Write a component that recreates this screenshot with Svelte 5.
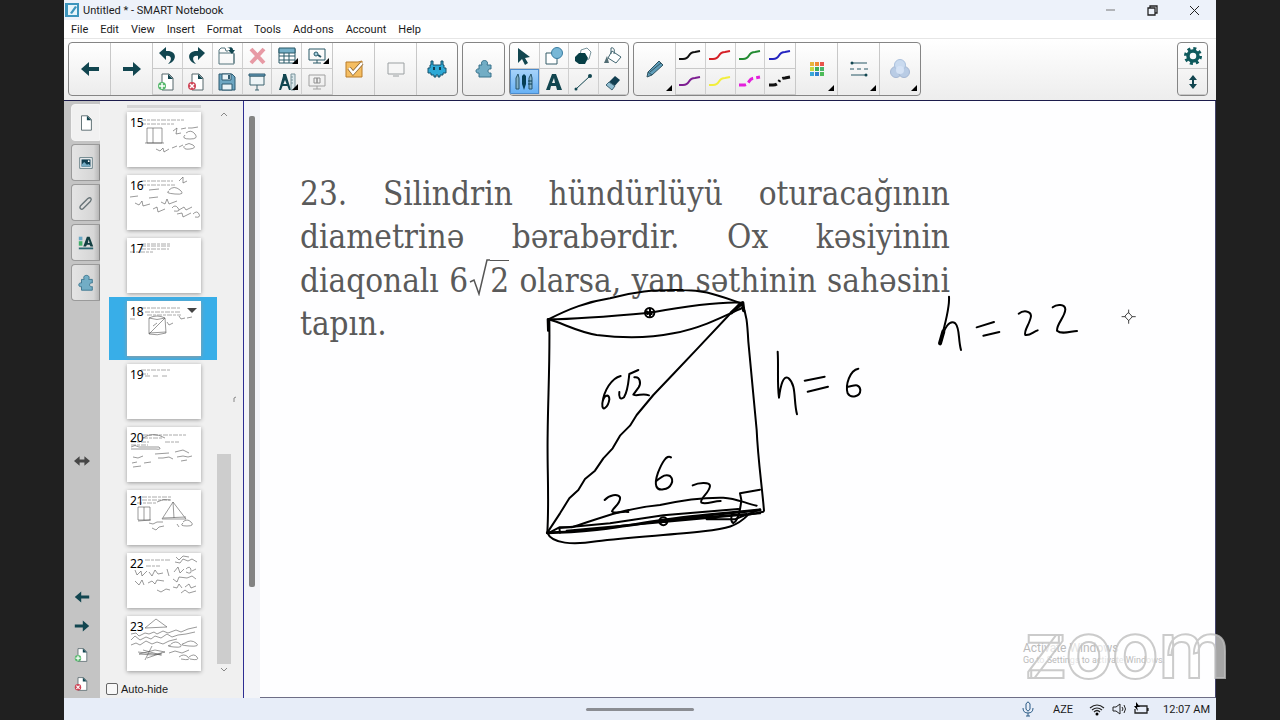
<script lang="ts">
	const menus = ['File', 'Edit', 'View', 'Insert', 'Format', 'Tools', 'Add-ons', 'Account', 'Help'];

	const dark = '#124650';
	const page = '<path d="M5 2h7l4 4v12H5z" fill="#fff" stroke="#55666b"/><path d="M11 2l5 5h-5z" fill="#124650"/>';
	const swirl = 'M-1 12H3C11 12 7 5 15 5L20 4';

	// All icons are drawn on a 20x20 grid
	const icons: Record<string, string> = {
		back: `<path d="M1 10l8-7v5h10v4H9v5z" fill="${dark}"/>`,
		forward: `<path d="M19 10l-8-7v5H1v4h10v5z" fill="${dark}"/>`,
		undo: `<path d="M2 7l7-6v4c12-1 11 11 2 13 5-5 3-9-2-8v4z" fill="${dark}"/>`,
		redo: `<path d="M18 7l-7-6v4C-1 4 0 16 9 18c-5-5-3-9 2-8v4z" fill="${dark}"/>`,
		open: '<path d="M2 18V4l2-2h4l1 3h2M2 18h15V7H2M17 8v9" fill="none" stroke="#54747d"/><path d="M10 2c5-2 6 0 6 2h2l-3 4-4-4h2c0-2-1-2-3-2z" fill="#124650"/>',
		remove: '<path d="M4 3l13 14M17 3L4 17" stroke="#e79aa5" stroke-width="4"/>',
		table: '<path d="M2 3h16v14H2z" fill="#fff" stroke="#285867"/><path d="M2 2h16v5H2z" fill="#76b0c8" stroke="#285867"/><path d="M2 10h16M2 14h16M7 7v10M12 7v10" stroke="#285867"/>',
		capture: '<path d="M2 3h16v11H2zM10 14v3M6 17h8" fill="none" stroke="#285867"/><circle cx="9" cy="8" r="2" fill="#a6cfdf" stroke="#285867"/><path d="M11 9l3 2" stroke="#285867" stroke-width="2"/>',
		addPage: page + '<circle cx="5" cy="14" r="4" fill="#58b96e"/><path d="M5 11v6M2 14h6" stroke="#fff" stroke-width="1.5"/>',
		delPage: page + '<circle cx="5" cy="14" r="4" fill="#cf4557"/><path d="M3 12l4 4M7 12l-4 4" stroke="#fff" stroke-width="1.5"/>',
		save: '<path d="M2 2h13l3 3v13H2z" fill="#6da6c2" stroke="#2f5b70"/><path d="M5 2h9v6H5zM5 12h10v6H5z" fill="#e9f3f7" stroke="#2f5b70"/><path d="M11 3h2v4h-2z" fill="#2f5b70"/>',
		screen: '<path d="M3 4h14v9H3z" fill="#eef4f6" stroke="#3f6570"/><path d="M2 2h16v2H2z" fill="#6da6c2" stroke="#2f5b70"/><path d="M10 13v5M8 18h4" stroke="#3f6570"/>',
		measure: '<path d="M6 2h3l5 16h-2L8 8 4 18H2L6 4z" fill="#124650"/><path d="M4 13h7" stroke="#124650" stroke-width="2"/><path d="M14 2h4v16h-4zM14 5h2M14 8h2M14 11h2" fill="#dbe8ec" stroke="#78939b"/>',
		dual: '<path d="M2 3h16v11H2zM10 14v3M6 17h8" fill="none" stroke="#a0a0a0"/><path d="M7 6h3v5H7zM10 6h3v5h-3z" fill="none" stroke="#909090"/>',
		check: '<path d="M2 3h12l4-1v16H2V3z" fill="#f5be62" stroke="#b97d2b"/><path d="M5 9l4 5 9-10" fill="none" stroke="#8d6631" stroke-width="4"/><path d="M5 9l4 5 9-10" fill="none" stroke="#fff" stroke-width="2.5"/>',
		monitor: '<path d="M2 4h16v11H2z" fill="#f6f6f6" stroke="#9ba0a2"/><path d="M7 17h6" stroke="#9ba0a2"/>',
		monster: '<path d="M4 2h2v4h8V2h2v4h1v3h2v5h-3v2h-3v2h-2v-2H9v2H7v-2H4v-2H1V9h2V6h1z" fill="#2da9d6" stroke="#17516b"/><path d="M6 8h2v3H6zM12 8h2v3h-2z" fill="#123f51"/>',
		puzzle: '<path d="M8 6c-3-6 8-6 5 0h4v4c-4-1-4 5 0 4v4H5v-4c-4 1-4-5 0-4V6z" fill="#72adc5" stroke="#39738c"/>',
		pointer: `<path d="M4 2l12 9-5 1 3 5-3 2-3-6-4 4z" fill="${dark}"/>`,
		shapes: '<path d="M2 7h11v11H2z" fill="#fff" stroke="#355d68"/><circle cx="13" cy="7" r="5.500" fill="#78b7d6" stroke="#3a7da1"/>',
		polygon: '<path d="M8 4l6-2 4 4-2 7-5 2-4-5z" fill="#fff" stroke="#78939b"/><path d="M2 11l4-4h6l3 5-3 6H6l-4-3z" fill="#063e45"/>',
		fill: '<path d="M9 5l9 6-5 6-8-5zM8 2c3-1 4 2 3 6M8 2v6" fill="#fff" stroke="#416570"/><path d="M4 10l2 7H1z" fill="#506c73"/>',
		pens: '<path d="M2 17V6l2-4 1 4v11zM15 17V6l2-4 1 4v11z" fill="#84b2c8" stroke="#28556a"/><path d="M8 4l2-2 2 2v8l-2 6-2-6z" fill="#063e55"/><path d="M14 9h4M14 12h4" stroke="#063e55"/>',
		text: '<path d="M8 2h4l6 16h-5l-1-4H7l-1 4H2zM8 11h3l-1-5z" fill="#124650" fill-rule="evenodd"/>',
		line: '<path d="M3 17L17 4" stroke="#124650"/><circle cx="3" cy="17" r="1.500" fill="#124650"/><circle cx="17" cy="4" r="2" fill="#124650"/>',
		eraser: '<path d="M3 13L12 4l5 4-8 9z" fill="#123f51"/><path d="M3 13l3-3 6 4-3 4z" fill="#90bdd1" stroke="#406778"/>',
		pen: '<path d="M3 13L14 2l4 4L7 16l-5 2z" fill="#5f9db9" stroke="#2f5361"/><path d="M3 13l4 3M5 13L16 4" stroke="#2f5361"/>',
		styles: '<path d="M2 4h16M2 16h16" stroke="#285867"/><path d="M1 10h18" stroke="#285867" stroke-dasharray="4 3"/><circle cx="3" cy="4" r="1.500" fill="#124650"/><circle cx="17" cy="16" r="1.500" fill="#124650"/>',
		blend: '<circle cx="6" cy="13" r="5.500" fill="#b9cce5" stroke="#a4b7d2"/><circle cx="14" cy="13" r="5.500" fill="#b9cce5" stroke="#a4b7d2"/><circle cx="10" cy="6" r="5.500" fill="#c9daef" stroke="#aac0dd"/><circle cx="10" cy="11" r="4" fill="#d4e2f5"/>',
		gear: '<circle cx="10" cy="10" r="5" fill="none" stroke="#0f5a5d" stroke-width="3.500"/><circle cx="10" cy="10" r="7.500" fill="none" stroke="#0f5a5d" stroke-width="3" stroke-dasharray="3 2.900"/>',
		updown: `<path d="M10 3l4 5h-3v4h3l-4 5-4-5h3V8H6z" fill="${dark}"/>`,
		leftright: '<path d="M0 10l7-6v4h6V4l7 6-7 6v-4H7v4z" fill="#474747"/>',
		page,
		gallery: '<path d="M3 4h14v12H3z" fill="#f3f6f7" stroke="#5f7980"/><path d="M5 6h10v8H5z" fill="#123f51"/><path d="M5 12l3-3 3 3 2-1 2 2v1H5z" fill="#77adc5"/><circle cx="13" cy="8" r="1" fill="#fff"/>',
		clip: '<path d="M5 12l7-7c3-2 5 0 3 3l-8 8c-2 2-5 0-3-3l7-7" fill="none" stroke="#687478" stroke-width="1.500"/>',
		properties: '<path d="M2 3h4v4H2z" fill="#69a8c6"/><path d="M2 8h4v5H2z" fill="#42af69"/><path d="M2 15h16v2H2z" fill="#2d6872"/><path d="M11 3h3l4 11h-3l-1-2h-3l-1 2H7zM12 10h2l-1-4z" fill="#123f41" fill-rule="evenodd"/>'
	};

	const edits = ['undo', 'redo', 'open', 'remove', 'table', 'capture', 'addPage', 'delPage', 'save', 'screen', 'measure', 'dual'];
	const tools = ['pointer', 'shapes', 'polygon', 'fill', 'pens', 'text', 'line', 'eraser'];
	const hasMenu = ['table', 'capture', 'measure'];

	const strokes = [
		{ color: '#111' },
		{ color: '#d52027' },
		{ color: '#238b32' },
		{ color: '#2424c0' },
		{ color: '#7d1e91' },
		{ color: '#f2ee3c' },
		{ color: '#e31edb', dash: '7 3', width: 3 },
		{ color: '#111', dash: '8 3 2 3', width: 3 }
	];

	const palette = ['#e8b43c', '#f08a35', '#e8544b', '#c6d83f', '#3fae5b', '#48b56a', '#38a6d8', '#2f7fd0', '#4dbb58'];

	// Miniature ink for each page, on a 74x55 grid
	const pages = [
		{ n: 15, print: ['M14 8h43', 'M14 12h33'], ink: 'M20 16h15v15H20zM26 16v15M18 31h19M46 19l4-3-1 6 5-1M54 17l5-1M61 16l4 0 6-1M29 37l4 2 3-3 1 4 5-3M45 36l5-2M52 35l4-2M59 21q5-4 9 1t-5 5-5-4M58 33q4-3 8 0t-3 4-6-3' },
		{ n: 16, print: ['M14 6h32', 'M14 10h34'], ink: 'M52 6l4-4 0 6 4-2M22 15l10-1M42 15q5-5 11 0t-5 4-6-3M3 22l8-1M8 28l4 2 3-4 1 5 7-2M22 23l9-1M34 27l4 2 2-5 2 5 8-3M26 34l4-2 1 5 7-3M45 33q3-4 6 0t-4 3M52 35l5-3 2 3 6-3M50 39l5-1 1 4 8-4M66 39q4-4 6 0t-4 3' },
		{ n: 17, print: ['M14 6h29', 'M14 8h29', 'M14 11h28', 'M3 14h23'], ink: '' },
		{ n: 18, print: ['M14 7h39', 'M18 11h35', 'M20 14h34', 'M3 18h6'], ink: 'M22 17q8-4 16 0l1 15q-9 3-17 1zM22 17q8 3 16 0L22 33M22 32l17-1M26 25l4-3M40 21l2 3 4-2M52 15l2 3 4-1M60 17l5-1' },
		{ n: 19, print: ['M14 6h29', 'M14 10h7', 'M18 12h6M26 12h6M35 12h6'], ink: '' },
		{ n: 20, print: ['M16 8h43', 'M16 11h20', 'M4 15h18M38 15h14', 'M4 18h17'], ink: 'M16 11q10-7 22 0M4 20q4-3 8 0h20q3 3-3 2L4 22M6 30l5 1 5-2M28 27l14-1M31 31l5 0 6-1 4 2M48 25l8-2 6 3M50 30l6-1 5 1 4-1M5 36l5-1M17 36l7-1M6 40l8-1M54 34l6-1' },
		{ n: 21, print: ['M15 7h30', 'M15 10h28', 'M10 13h20'], ink: 'M11 17h12v13H11zM17 17v13M11 31l13-1M46 12L35 29h24zM46 12l1 16M36 28l23-1M22 33l4 1 4-2 6 0M25 38l4 2 3-3 5-1M50 34l2 3M56 32q4-4 8 0t-4 4-4-3M30 12q6-4 14-2' },
		{ n: 22, print: ['M18 7h25', 'M19 13h14'], ink: 'M8 17l2 5 4-4 1 5 5-5M22 19l3 4 3-6 3 4 5-1M40 16l2 7M47 19l4-5 2 6 4-4M59 16q4-4 5 1t-5 2M65 18l4-2M8 28l4 4 3-5 2 5M21 30l4-2 3 3 2-4 7 1M46 26l4 3 2-5 8 1 5-2 4 3M46 34l4 1 2-4 3 4M58 34l4-3 2 4 5-2M30 37l4 2 5-3 4 1M54 40l4-3 4 3 7-2M49 4l3 3 4-4 6 1M48 9l5 1 3-4 5 2 4-2 5 3' },
		{ n: 23, print: [], ink: 'M18 12L29 3l11 8zM4 18l5-1 3 3 6-3 4 1 5-2 3 2 6-3 5 2 8-3 5 2 7-3 9-2M4 24l4-4 5 4 6-3 5 2 4-3 6 2 6-4 5 3 6-2 8-1 9-2M4 29l5-2 4 2 6-4 6 3 5-2 6 2 6-3 8-2M12 38l16-4 10 2-12 3zM11 36l24 3M16 34l18 5M25 30l-7 14M20 42l15-5M44 28q5-4 9 0t-6 3-3-2M58 27q6-4 11 0t-7 3-4-3M42 37l6-2 7 2 7-3M52 41q5-4 9 0t-7 2M62 41q5-4 8 0t-7 2' }
	];

	let selected = $state(18);
	let tool = $state('pens');
	let tab = $state('page');
	let auto_hide = $state(false);
</script>

{#snippet icon(name: string)}
	<svg class="icon" viewBox="0 0 20 20" aria-hidden="true">{@html icons[name]}</svg>
{/snippet}

<div class="screen">
	<div class="window">
		<header class="titlebar">
			<svg class="logo" viewBox="0 0 14 14" aria-hidden="true">
				<path d="M0 0h14v14H0z" fill="#3d95bd" />
				<path d="M3 2h9v10H3z" fill="#e7f5fb" />
				<path d="M5 10l5-7 2 1-5 7z" fill="#3d95bd" />
			</svg>
			<span class="title">Untitled * - SMART Notebook</span>
			<button class="caption" aria-label="Minimize">
				<svg viewBox="0 0 12 12"><path d="M2 6h9" stroke="#777" /></svg>
			</button>
			<button class="caption" aria-label="Restore">
				<svg viewBox="0 0 12 12"><path d="M2 4h7v7H2zM4 4V2h7v7H9" fill="none" stroke="#222" stroke-width="1.3" /></svg>
			</button>
			<button class="caption" aria-label="Close">
				<svg viewBox="0 0 12 12"><path d="M2 2l9 9M11 2l-9 9" stroke="#222" /></svg>
			</button>
		</header>

		<nav class="menubar">
			{#each menus as menu}
				<button>{menu}</button>
			{/each}
		</nav>

		<div class="toolbar">
			<div class="group">
				<button class="big" aria-label="Previous page">{@render icon('back')}</button>
				<button class="big" aria-label="Next page">{@render icon('forward')}</button>
				<div class="small six">
					{#each edits as name}
						<button class:more={hasMenu.includes(name)} aria-label={name}>{@render icon(name)}</button>
					{/each}
				</div>
				<button class="big" aria-label="Response">{@render icon('check')}</button>
				<button class="big" aria-label="Display">{@render icon('monitor')}</button>
				<button class="big" aria-label="Activities">{@render icon('monster')}</button>
			</div>

			<div class="group">
				<button class="big" aria-label="Add-ons">{@render icon('puzzle')}</button>
			</div>

			<div class="group">
				<div class="small four">
					{#each tools as name}
						<button class:active={tool === name} aria-label={name} onclick={() => (tool = name)}>{@render icon(name)}</button>
					{/each}
				</div>
			</div>

			<div class="group">
				<button class="big more" aria-label="Pen types">{@render icon('pen')}</button>
				<div class="small four">
					{#each strokes as s}
						<button aria-label="Pen stroke">
							<svg class="stroke" viewBox="-2 0 24 18">
								<path d={swirl} fill="none" stroke={s.color} stroke-width={s.width ?? 2} stroke-dasharray={s.dash} />
							</svg>
						</button>
					{/each}
				</div>
				<button class="big more" aria-label="Color">
					<svg class="icon" viewBox="0 0 20 20">
						{#each palette as color, i}
							<rect x={3 + (i % 3) * 5} y={3 + Math.floor(i / 3) * 5} width="4" height="4" fill={color} />
						{/each}
					</svg>
				</button>
				<button class="big more" aria-label="Line style">{@render icon('styles')}</button>
				<button class="big more" aria-label="Transparency">{@render icon('blend')}</button>
			</div>

			<div class="group last">
				<div class="small one">
					<button aria-label="Settings">{@render icon('gear')}</button>
					<button aria-label="Move toolbar">{@render icon('updown')}</button>
				</div>
			</div>
		</div>

		<main>
			<aside class="tabs">
				{#each ['page', 'gallery', 'clip', 'properties', 'puzzle'] as name}
					<button class="tab" class:open={tab === name} aria-label={name} onclick={() => (tab = name)}>{@render icon(name)}</button>
				{/each}
				<span class="space-top"></span>
				<button class="side" aria-label="Move sidebar">{@render icon('leftright')}</button>
				<span class="space-bottom"></span>
				<button class="side" aria-label="Previous">{@render icon('back')}</button>
				<button class="side" aria-label="Next">{@render icon('forward')}</button>
				<button class="side" aria-label="Add page">{@render icon('addPage')}</button>
				<button class="side" aria-label="Delete page">{@render icon('delPage')}</button>
			</aside>

			<section class="sorter">
				<div class="list">
					<div class="thumbs">
						<span class="cut"></span>
						{#each pages as p}
							<button class="row" class:selected={selected === p.n} onclick={() => (selected = p.n)}>
								<span class="thumb">
									<svg viewBox="0 0 74 55" aria-hidden="true">
										{#each p.print as d}
											<path {d} stroke="#aaa" stroke-dasharray="5 1 3 1" fill="none" />
										{/each}
										<path d={p.ink} stroke="#555" stroke-width="0.6" fill="none" />
										{#if selected === p.n}
											<path d="M60 7h10l-5 5z" fill="#444" />
										{/if}
									</svg>
									<b>{p.n}</b>
								</span>
							</button>
						{/each}
					</div>
					<div class="scrollbar">
						<svg viewBox="0 0 14 12"><path d="M4 8l3-3 3 3" fill="none" stroke="#888" /></svg>
						<span class="above"></span>
						<span class="handle"></span>
						<svg viewBox="0 0 14 12"><path d="M4 4l3 3 3-3" fill="none" stroke="#888" /></svg>
					</div>
				</div>
				<label class="auto-hide"><input type="checkbox" bind:checked={auto_hide} />Auto-hide</label>
				<svg class="fleck" viewBox="0 0 4 6" aria-hidden="true"><path d="M1 6V2l2-1" fill="none" stroke="#888" /></svg>
			</section>

			<div class="rail"><span></span></div>

			<article class="page">
				<div class="question">
					<p>23. Silindrin hündürlüyü oturacağının</p>
					<p>diametrinə bərabərdir. Ox kəsiyinin</p>
					<p>diaqonalı 6<svg class="root" viewBox="0 0 22 38" aria-hidden="true"><path d="M2 24l4-2 5 14L19 2h3" fill="none" stroke="#555" stroke-width="1.5" /></svg><span class="radicand">2</span> olarsa, yan səthinin sahəsini</p>
					<p class="end">tapın.</p>
				</div>

				<!-- Cylinder and its labels -->
				<svg class="ink cylinder" viewBox="0 0 1050 840" aria-hidden="true">
					<path d="M55 118C120 85 170 66 240 55C310 35 370 28 460 30C520 30 550 42 635 70" />
					<path d="M55 118C150 117 250 108 360 98C460 80 560 64 635 68" />
					<path d="M55 118C100 130 140 155 200 165C290 176 370 172 430 160C510 145 570 115 636 84" />
					<path d="M53 118L54 152M58 120C60 250 54 350 53 460C51 570 58 650 52 758" />
					<path d="M635 70C650 100 652 130 655 185C664 280 673 370 680 450C684 540 695 610 702 692" />
					<path d="M628 72L500 208L430 282L370 345L320 405L300 437L270 467L248 505L220 535L195 572L165 597L145 630L118 655L90 700L52 758" />
					<path d="M604 98L638 68L641 92" stroke-width="10" />
					<circle cx="359" cy="98" r="14" /><path d="M350 94l15 8M360 88v20M352 102l14-6" />
					<path d="M52 758C65 792 130 795 200 784C300 770 420 766 520 754C590 746 620 740 655 704L700 695" />
					<path d="M58 758L88 742L125 742C200 718 280 685 390 675C470 657 530 652 580 653C620 655 645 670 680 677" />
					<path d="M52 758C210 758 350 723 480 710C570 702 630 695 690 690" stroke-width="9" />
					<path d="M90 758L88 744L240 730L400 706L625 687M110 752L690 700M410 720L650 702M530 718L614 718L690 688" />
					<circle cx="400" cy="724" r="12" /><path d="M392 720l15 7M394 728l12-8" />
					<path d="M690 629L630 640L634 660C630 700 620 725 610 729C602 725 604 708 607 698" />
					<path d="M224 660C238 644 263 640 270 652C273 670 250 682 246 694C254 704 274 692 295 696" />
					<path d="M488 616C508 606 540 606 540 618C538 640 508 655 514 668C530 674 550 663 572 663" />
					<path d="M423 532C410 522 395 550 384 578C370 618 380 632 400 628C424 625 434 600 420 588C405 580 394 592 380 602" />
					<path d="M272 288C245 295 222 330 217 370C215 400 235 380 238 358C238 340 222 345 218 365" />
					<path d="M268 336C266 350 270 362 282 352C295 330 296 295 298 282L325 270M313 292C330 288 334 310 326 322L310 344C325 350 335 338 357 346" />
					<path d="M743 215C746 260 741 310 747 353C752 315 760 285 775 294C800 315 790 360 801 403" />
					<path d="M824 302L884 290M833 335L894 320" />
					<path d="M985 266C960 270 945 315 953 340C963 357 991 350 991 330C988 308 970 318 954 320" />
				</svg>

				<svg class="ink note" viewBox="0 0 720 300" aria-hidden="true">
					<path d="M87 50C90 90 68 155 60 190" /><path d="M70 155L60 190" stroke-width="12" />
					<path d="M62 188C72 140 90 118 106 130C120 145 114 178 123 210" />
					<path d="M170 142L222 126M190 167L238 156" />
					<path d="M296 101C310 90 332 92 333 108C330 132 310 152 316 165C330 168 340 155 353 151" />
					<path d="M398 82C410 72 435 72 436 88C435 112 410 130 411 152C425 164 448 155 471 153" />
					<path class="cursor" d="M626 98L637 110L626 122L615 110zM626 90v9M626 121v9M606 110h10M636 110h10" />
				</svg>

				<div class="activate">
					<p>Activate Windows</p>
					<small>Go to Settings to activate Windows.</small>
				</div>
			</article>
		</main>

		<footer class="taskbar">
			<span class="home"></span>
			<svg viewBox="0 0 16 16"><path d="M6 3q2-4 4 0v5q-2 4-4 0zM3 7q0 5 5 5t5-5M8 12v3M6 15h4" fill="none" stroke="#2a5b86" /></svg>
			<span class="lang">AZE</span>
			<svg viewBox="0 0 16 16"><path d="M1 7q7-6 14 0M3 9q5-4 10 0M5 11q3-3 6 0" fill="none" stroke="#222" stroke-width="1.2" /><circle cx="8" cy="13" r="1.5" /></svg>
			<svg class="volume" viewBox="0 0 16 16"><path d="M2 6h3l4-3v10l-4-3H2zM11 6q2 2 0 4M13 4q3 4 0 8" fill="none" stroke="#222" /></svg>
			<svg class="battery" viewBox="0 0 16 16"><path d="M6 5h8v7H2V8M15 7v3" fill="none" stroke="#222" stroke-width="1.3" /><path d="M3 1l4 5H4l1 4-4-5h2z" /></svg>
			<time>12:07 AM</time>
		</footer>
	</div>

	<div class="watermark">zoom</div>
</div>

<style>
	:global(body) {
		margin: 0;
		background: #202020;
	}

	.screen {
		position: relative;
		box-sizing: border-box;
		height: 100vh;
		padding: 0 64px;
		overflow: hidden;

		background: #202020;
		font-family: Roboto, 'Noto Sans', sans-serif;
		font-size: 11px;
		color: #1b1b1b;
	}

	.window {
		display: flex;
		flex-direction: column;
		height: 100%;
		background: #f0f0f0;
	}

	button {
		display: flex;
		align-items: center;
		justify-content: center;
		box-sizing: border-box;
		margin: 0;
		padding: 0;
		border: none;
		background: none;
		font: inherit;
		color: inherit;
	}

	p {
		margin: 0;
	}

	.icon {
		display: block;
		width: 20px;
		height: 20px;
	}

	.titlebar {
		display: flex;
		align-items: center;
		flex: none;
		box-sizing: border-box;
		height: 20px;
		padding-right: 1px;
		background: #edf2fa;
	}

	.logo {
		width: 14px;
		height: 14px;
		margin: 0 4px 0 1px;
	}

	.title {
		flex: 1;
	}

	.caption {
		width: 42px;
		height: 20px;
	}

	.caption svg {
		width: 12px;
		height: 12px;
	}

	.menubar {
		display: flex;
		align-items: center;
		flex: none;
		gap: 12px;
		height: 18px;
		padding-left: 7px;
		background: #fff;
	}

	/* Toolbar */
	.toolbar {
		display: flex;
		align-items: flex-start;
		flex: none;
		gap: 4px;
		box-sizing: border-box;
		height: 63px;
		padding: 3px 8px 0 4px;
		border-top: 1px solid #e6e6e6;
		border-bottom: 1px solid #1c1c4c;
		background: linear-gradient(#fff, #ededed);
	}

	.group {
		display: flex;
		box-sizing: border-box;
		height: 54px;
		overflow: hidden;
		border: 1px solid #858585;
		border-radius: 4px;
		background: linear-gradient(#fff, #ececec);
	}

	.group.last {
		margin-left: auto;
	}

	.big {
		position: relative;
		width: 42px;
	}

	.big:first-child,
	.big:last-child {
		width: 41px;
	}

	.group > * + * {
		border-left: 1px solid #c8c8c8;
	}

	.small {
		display: grid;
		box-sizing: border-box;
		grid-template-rows: 26px 26px;
	}

	.six {
		grid-template-columns: repeat(6, 1fr);
		width: 180px;
	}

	.four {
		grid-template-columns: repeat(4, 1fr);
		width: 120px;
	}

	.four:only-child {
		width: 118px;
	}

	.one {
		grid-template-columns: 29px;
	}

	.small button {
		position: relative;
		border-right: 1px solid #cfcfcf;
		border-bottom: 1px solid #c8c8c8;
	}

	.six button:nth-child(6n),
	.four button:nth-child(4n),
	.one button {
		border-right: none;
	}

	.small button.active {
		background: linear-gradient(#a9d4fa, #65b0f5);
		box-shadow: inset 0 0 0 1px #4d8ccc;
	}

	.more::after {
		content: '';
		position: absolute;
		right: 3px;
		bottom: 4px;
		border-bottom: 6px solid #000;
		border-left: 6px solid transparent;
	}

	.stroke {
		width: 24px;
		height: 18px;
	}

	main {
		display: flex;
		flex: 1;
		min-height: 0;
	}

	/* Side tabs */
	.tabs {
		display: flex;
		flex-direction: column;
		flex: none;
		box-sizing: border-box;
		width: 36px;
		padding: 3px 0 0 7px;
		background: #c4c4c4;
	}

	.tab {
		height: 37px;
		margin-bottom: 3px;
		border: 1px solid #9a9a9a;
		border-right-color: #888;
		border-radius: 4px 0 0 4px;
		background: linear-gradient(90deg, #e4e4e4, #d6d6d6 80%, #b8b8b8);
	}

	.tab.open {
		border-color: #f5f5f5;
		background: #f1f1f1;
	}

	.tab .icon {
		width: 18px;
		height: 18px;
	}

	.space-top {
		flex: 4;
	}

	.space-bottom {
		flex: 3;
	}

	.side {
		width: 22px;
		height: 29px;
	}

	.side .icon {
		width: 16px;
		height: 16px;
	}

	/* Page sorter */
	.sorter {
		position: relative;
		display: flex;
		flex-direction: column;
		flex: none;
		width: 143px;
		background: #f0f0f0;
	}

	.list {
		display: flex;
		flex: 1;
		min-height: 0;
		padding: 4px 12px 4px 9px;
	}

	.thumbs {
		flex: 1;
	}

	.cut {
		display: block;
		height: 3px;
		margin: 0 16px 0 18px;
		background: #d6d6d6;
	}

	.row {
		width: 100%;
		height: 63px;
	}

	.row.selected {
		background: #38aee8;
	}

	.thumb {
		position: relative;
		width: 74px;
		height: 55px;
		margin-left: 2px;
		background: #fff;
		box-shadow: 0 1px 4px #999;
	}

	.thumb svg {
		display: block;
	}

	.thumb b {
		position: absolute;
		top: 3px;
		left: 3px;
		font-family: 'Noto Sans', sans-serif;
		font-size: 12px;
		font-weight: 400;
		line-height: 15px;
		color: #000;
	}

	.scrollbar {
		display: flex;
		flex-direction: column;
		width: 14px;
		margin-top: 3px;
	}

	.scrollbar svg {
		height: 12px;
	}

	.above {
		flex: 332;
	}

	.handle {
		flex: 209;
		background: #cdcdcd;
	}

	.fleck {
		position: absolute;
		top: 295px;
		right: 6px;
		width: 4px;
		height: 6px;
	}

	.auto-hide {
		display: flex;
		align-items: center;
		gap: 3px;
		height: 18px;
		padding-left: 6px;
		font-family: 'Liberation Sans', sans-serif;
	}

	.auto-hide input {
		appearance: none;
		width: 12px;
		height: 12px;
		margin: 0;
		border: 1px solid #666;
		border-radius: 2px;
		background: #f8f8f8;
	}

	.auto-hide input:checked {
		background: #38aee8;
	}

	/* Page */
	.rail {
		flex: none;
		box-sizing: border-box;
		width: 17px;
		padding: 15px 4px 111px 5px;
		border-left: 1px solid #2d2d92;
		background: #f3f4f8;
	}

	.rail span {
		display: block;
		width: 6px;
		height: 100%;
		border-radius: 2px;
		background: #838383;
	}

	.page {
		position: relative;
		flex: 1;
		overflow: hidden;
		border-right: 1px solid #44446c;
		border-bottom: 1px solid #6e6e86;
		background: #fefeff;
	}

	.question {
		width: 650px;
		padding: 71px 0 0 40px;
		font-family: 'DejaVu Serif Condensed', 'Liberation Serif', serif;
		font-size: 33px;
		line-height: 43px;
		color: #5a5a5a;
	}

	.question p {
		white-space: nowrap;
		text-align-last: justify;
	}

	.question .end {
		text-align-last: left;
	}

	.root {
		width: 22px;
		height: 38px;
		margin-bottom: -4px;
		vertical-align: baseline;
	}

	.radicand {
		border-top: 1px solid #555;
	}

	.ink {
		position: absolute;
		fill: none;
		stroke: #000;
		stroke-width: 6;
		stroke-linecap: round;
		stroke-linejoin: round;
	}

	.cylinder {
		top: 179px;
		left: 270px;
		width: 350px;
		height: 280px;
	}

	.note {
		top: 179px;
		left: 660px;
		width: 240px;
		height: 100px;
	}

	.cursor {
		stroke: #444;
		stroke-width: 3;
	}

	.activate {
		position: absolute;
		right: 50px;
		bottom: 32px;
		color: #bbb;
		font-size: 12px;
		line-height: 14px;
	}

	.activate small {
		display: block;
		font-size: 9px;
		line-height: 10px;
	}

	/* Taskbar */
	.taskbar {
		position: relative;
		display: flex;
		align-items: center;
		justify-content: flex-end;
		flex: none;
		height: 22px;
		padding-right: 6px;
		background: #e7edf8;
	}

	.taskbar svg {
		width: 16px;
		height: 16px;
	}

	.taskbar .volume {
		margin: 0 6px;
	}

	.home {
		position: absolute;
		left: 50%;
		width: 108px;
		height: 3px;
		margin-left: -54px;
		border-radius: 2px;
		background: #8b8d93;
	}

	.lang {
		margin: 0 16px 0 17px;
	}

	time {
		margin-left: 14px;
	}

	.watermark {
		position: absolute;
		right: 50px;
		bottom: 29px;
		color: rgba(255, 255, 255, 0.6);
		font-family: Roboto, sans-serif;
		font-size: 82px;
		font-weight: 500;
		line-height: 82px;
		-webkit-text-stroke: 2px rgba(190, 190, 190, 0.8);
	}
</style>
